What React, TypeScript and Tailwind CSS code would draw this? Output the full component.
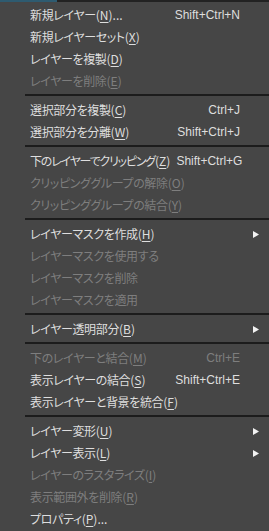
import React from "react"

type Item =
  | { sep: true }
  | { sep?: false; label: string; key?: string; tail?: string; shortcut?: string; disabled?: boolean; sub?: boolean; tight?: boolean }

const ITEMS: Item[] = [
  { label: "新規レイヤー", key: "N", tail: "...", shortcut: "Shift+Ctrl+N" },
  { label: "新規レイヤーセット", key: "X" },
  { label: "レイヤーを複製", key: "D" },
  { label: "レイヤーを削除", key: "E", disabled: true },
  { sep: true },
  { label: "選択部分を複製", key: "C", shortcut: "Ctrl+J" },
  { label: "選択部分を分離", key: "W", shortcut: "Shift+Ctrl+J" },
  { sep: true },
  { label: "下のレイヤーでクリッピング", key: "Z", shortcut: "Shift+Ctrl+G", tight: true },
  { label: "クリッピンググループの解除", key: "O", disabled: true },
  { label: "クリッピンググループの結合", key: "Y", disabled: true },
  { sep: true },
  { label: "レイヤーマスクを作成", key: "H", sub: true },
  { label: "レイヤーマスクを使用する", disabled: true },
  { label: "レイヤーマスクを削除", disabled: true },
  { label: "レイヤーマスクを適用", disabled: true },
  { sep: true },
  { label: "レイヤー透明部分", key: "B", sub: true },
  { sep: true },
  { label: "下のレイヤーと結合", key: "M", shortcut: "Ctrl+E", disabled: true },
  { label: "表示レイヤーの結合", key: "S", shortcut: "Shift+Ctrl+E" },
  { label: "表示レイヤーと背景を統合", key: "F" },
  { sep: true },
  { label: "レイヤー変形", key: "U", sub: true },
  { label: "レイヤー表示", key: "L", sub: true },
  { label: "レイヤーのラスタライズ", key: "I", disabled: true },
  { label: "表示範囲外を削除", key: "R", disabled: true },
  { label: "プロパティ", key: "P", tail: "..." },
]

function Arrow() {
  return (
    <svg width="6" height="7" viewBox="0 0 6 7" className="block">
      <path d="M0 0 L6 3.5 L0 7 Z" fill="#f2f2f2" />
    </svg>
  )
}

export default function App() {
  return (
    <div
      className="w-[269px] h-[531px] overflow-hidden bg-[#464646] text-[12px] leading-none select-none"
      style={{ fontFamily: '"Noto Sans CJK JP", "Noto Sans", sans-serif' }}
    >
      {/* top edge */}
      <div className="flex h-[2px]">
        <div className="w-[57px] bg-[#2e5b70]" />
        <div className="flex-1 bg-[#222222]" />
      </div>
      <div className="pt-[2px]">
        {ITEMS.map((it, i) =>
          it.sep ? (
            <div key={i} className="h-[7px] pt-[2px] pl-[25px]">
              <div className="h-[2px] bg-[#1c1c1c]" />
            </div>
          ) : (
            <div
              key={i}
              className={`flex h-[22px] items-center pl-[30px] ${it.disabled ? "text-[#7e7e7e]" : "text-[#dedede]"}`}
            >
              <div
                className={`flex-1 whitespace-nowrap [font-feature-settings:'palt'] ${it.tight ? "tracking-[-0.1em]" : "tracking-[-0.03em]"}`}
              >
                {it.label}
                <span className="tracking-normal">
                  {it.key && (
                    <>
                      (<span className="underline underline-offset-2">{it.key}</span>)
                    </>
                  )}
                  {it.tail}
                </span>
              </div>
              <div className="whitespace-nowrap pl-[6px] text-right" style={{ fontFamily: '"Liberation Sans", sans-serif' }}>
                {it.shortcut}
              </div>
              <div className="w-[29px] pl-[13px]">{it.sub && <Arrow />}</div>
            </div>
          )
        )}
      </div>
    </div>
  )
}
